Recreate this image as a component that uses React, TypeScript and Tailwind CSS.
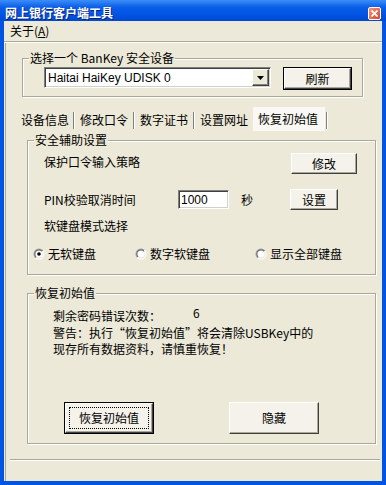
import React from "react";

const font = "font-['Noto_Sans_CJK_SC','Liberation_Sans',sans-serif]";

function RaisedFace({ children }: { children?: React.ReactNode }) {
  return (
    <div className="w-full h-full flex items-center justify-center bg-[#f4f2ea] border border-t-white border-l-white border-r-[#404040] border-b-[#404040] shadow-[inset_-1px_-1px_0_#aca899]">
      {children}
    </div>
  );
}

function Btn({
  className,
  children,
  def = false,
  focus = false,
}: {
  className: string;
  children: React.ReactNode;
  def?: boolean;
  focus?: boolean;
}) {
  const label = <span className="text-[12px] leading-[14px] text-black">{children}</span>;
  if (def) {
    return (
      <div className={`${className} border border-black shrink-0`}>
        <RaisedFace>
          {focus ? (
            <div className="w-[calc(100%-6px)] h-[calc(100%-6px)] border border-dotted border-black flex items-center justify-center">
              {label}
            </div>
          ) : (
            label
          )}
        </RaisedFace>
      </div>
    );
  }
  return (
    <div className={`${className} shrink-0`}>
      <RaisedFace>{label}</RaisedFace>
    </div>
  );
}

function Group({
  label,
  className,
  children,
}: {
  label: string;
  className: string;
  children?: React.ReactNode;
}) {
  return (
    <div
      className={`relative border border-[#aca899] shadow-[inset_1px_1px_0_white,1px_1px_0_white] ${className}`}
    >
      <span className="absolute left-[6px] top-[-8px] px-[1px] bg-[#ece9d8] text-[12px] leading-[14px] text-black whitespace-nowrap">
        {label}
      </span>
      {children}
    </div>
  );
}

function Radio({ checked }: { checked?: boolean }) {
  return (
    <svg width="12" height="12" viewBox="0 0 12 12" className="shrink-0">
      <defs>
        <linearGradient id="ro" x1="0" y1="0" x2="1" y2="1">
          <stop offset="0.5" stopColor="#a0a0a0" />
          <stop offset="0.5" stopColor="#ffffff" />
        </linearGradient>
        <linearGradient id="ri" x1="0" y1="0" x2="1" y2="1">
          <stop offset="0.5" stopColor="#606060" />
          <stop offset="0.5" stopColor="#e4e2d8" />
        </linearGradient>
      </defs>
      <circle cx="6" cy="6" r="5.5" fill="url(#ro)" />
      <circle cx="6" cy="6" r="4.5" fill="url(#ri)" />
      <circle cx="6" cy="6" r="3.6" fill="#ffffff" />
      {checked && <circle cx="6" cy="6" r="1.8" fill="#000000" />}
    </svg>
  );
}

function TabSep({ className }: { className: string }) {
  return <div className={`${className} w-[2px] h-[17px] border-l border-[#808080] border-r border-r-white shrink-0`} />;
}

export default function App() {
  return (
    <div className={`w-[386px] h-[485px] overflow-hidden bg-[#0054e3] flex flex-col ${font}`}>
      {/* Title bar */}
      <div className="h-[21px] shrink-0 flex items-end justify-between bg-[linear-gradient(180deg,#3c8ef8_0%,#0a5de8_35%,#0054e3_70%,#0048cf_100%)]">
        <span className="pl-[5px] pb-[2px] text-[12px] leading-[13px] font-bold text-white [text-shadow:1px_1px_0_#0a1e78]">
          网上银行客户端工具
        </span>
        <div className="mr-[5px] mb-[1px] w-[13px] h-[13px] rounded-[2px] border border-white bg-[linear-gradient(135deg,#f0957a,#d8492a)] flex items-center justify-center">
          <svg width="7" height="7" viewBox="0 0 7 7">
            <path d="M0.5 0.5L6.5 6.5M6.5 0.5L0.5 6.5" stroke="white" strokeWidth="1.7" />
          </svg>
        </div>
      </div>

      {/* Middle */}
      <div className="flex-1 flex px-[4px] pb-[4px]">
        <div className="flex-1 bg-[#ece9d8] flex flex-col">
          {/* Menu */}
          <div className="h-[20px] shrink-0 flex items-center pl-[6px] text-[12px] leading-[14px] text-black">
            关于(<span className="underline">A</span>)
          </div>
          <div className="h-[2px] shrink-0 border-t border-[#aca899] border-b border-b-white" />

          {/* Body */}
          <div className="flex-1 ml-[1px] border-l border-[#aca899] flex flex-col">
            {/* BanKey group */}
            <Group label="选择一个 BanKey 安全设备" className="ml-[16px] mt-[15px] w-[341px] h-[39px]">
              <div className="flex items-start pl-[21px] pt-[8px]">
                <div className="w-[227px] h-[21px] bg-white border border-t-[#808080] border-l-[#808080] border-r-white border-b-white shadow-[inset_1px_1px_0_#404040,inset_-1px_-1px_0_#d4d0c8] flex items-center justify-between">
                  <span className="pl-[3px] text-[12px] leading-[14px] font-['Liberation_Sans',sans-serif] text-black">
                    Haitai HaiKey UDISK 0
                  </span>
                  <div className="w-[17px] h-[17px] mr-[1px] flex items-center justify-center bg-[#ece9d8] border border-t-white border-l-white border-r-[#404040] border-b-[#404040] shadow-[inset_-1px_-1px_0_#808080]">
                    <svg width="7" height="4" viewBox="0 0 7 4">
                      <path d="M0 0H7L3.5 4Z" fill="black" />
                    </svg>
                  </div>
                </div>
                <Btn className="ml-[12px] w-[69px] h-[23px]" def>
                  刷新
                </Btn>
              </div>
            </Group>

            {/* Tabs */}
            <div className="mt-[9px] h-[25px] flex items-center pl-[15px] text-[12px] leading-[14px] text-black">
              <span className="w-[48px] shrink-0 mt-[2px]">设备信息</span>
              <TabSep className="ml-[4px] mt-[4px]" />
              <span className="ml-[5px] w-[48px] shrink-0 mt-[2px]">修改口令</span>
              <TabSep className="ml-[5px] mt-[4px]" />
              <span className="ml-[5px] w-[48px] shrink-0 mt-[2px]">数字证书</span>
              <TabSep className="ml-[5px] mt-[4px]" />
              <span className="ml-[5px] w-[48px] shrink-0 mt-[2px]">设置网址</span>
              <div className="ml-[5px] h-[24px] w-[72px] bg-[#f9f8f4] flex items-center pl-[5px] shrink-0">
                <span>恢复初始值</span>
              </div>
              <TabSep className="ml-[1px] mt-[4px]" />
            </div>

            {/* 安全辅助设置 group */}
            <Group label="安全辅助设置" className="ml-[21px] mt-[9px] w-[349px] h-[135px]">
              <div className="flex flex-col text-[12px] leading-[14px] text-black">
                <div className="flex items-center pl-[16px] pt-[12px]">
                  <span className="w-[247px] shrink-0 -mt-[4px]">保护口令输入策略</span>
                  <Btn className="w-[66px] h-[21px]">修改</Btn>
                </div>
                <div className="flex items-center pl-[16px] mt-[15px]">
                  <span className="w-[134px] shrink-0">PIN校验取消时间</span>
                  <div className="w-[51px] h-[19px] shrink-0 bg-white border border-t-[#808080] border-l-[#808080] border-r-white border-b-white shadow-[inset_1px_1px_0_#404040,inset_-1px_-1px_0_#d4d0c8] flex items-center">
                    <span className="pl-[2px] font-['Liberation_Sans',sans-serif] text-[12px] leading-[14px]">1000</span>
                  </div>
                  <span className="ml-[12px] w-[12px] shrink-0">秒</span>
                  <Btn className="ml-[37px] w-[48px] h-[21px]">设置</Btn>
                </div>
                <div className="pl-[16px] mt-[9px] h-[14px]">软键盘模式选择</div>
                <div className="flex items-center pl-[5px] mt-[14px] h-[14px]">
                  <div className="w-[102px] flex items-center gap-[3px] shrink-0">
                    <Radio checked />
                    <span>无软键盘</span>
                  </div>
                  <div className="w-[120px] flex items-center gap-[3px] shrink-0">
                    <Radio />
                    <span>数字软键盘</span>
                  </div>
                  <div className="flex items-center gap-[3px] shrink-0">
                    <Radio />
                    <span>显示全部键盘</span>
                  </div>
                </div>
              </div>
            </Group>

            {/* 恢复初始值 group */}
            <Group label="恢复初始值" className="ml-[21px] mt-[18px] w-[349px] h-[151px]">
              <div className="flex flex-col text-[12px] text-black">
                <div className="flex items-start pl-[25px] mt-[15px] leading-[14px]">
                  <span className="w-[140px] shrink-0">剩余密码错误次数：</span>
                  <span className="-mt-[3px]">6</span>
                </div>
                <p className="pl-[25px] mt-[2px] leading-[16px]">
                  警告：执行“恢复初始值”将会清除USBKey中的
                  <br />
                  现存所有数据资料，请慎重恢复！
                </p>
                <div className="flex pl-[36px] mt-[45px]">
                  <Btn className="w-[90px] h-[32px]" def focus>
                    恢复初始值
                  </Btn>
                  <Btn className="ml-[75px] w-[90px] h-[32px]">隐藏</Btn>
                </div>
              </div>
            </Group>

            {/* bottom etched line */}
            <div className="ml-[4px] mt-[15px] w-[370px] h-[2px] border-t border-[#aca899] border-b border-b-white" />
          </div>
        </div>
      </div>
    </div>
  );
}
